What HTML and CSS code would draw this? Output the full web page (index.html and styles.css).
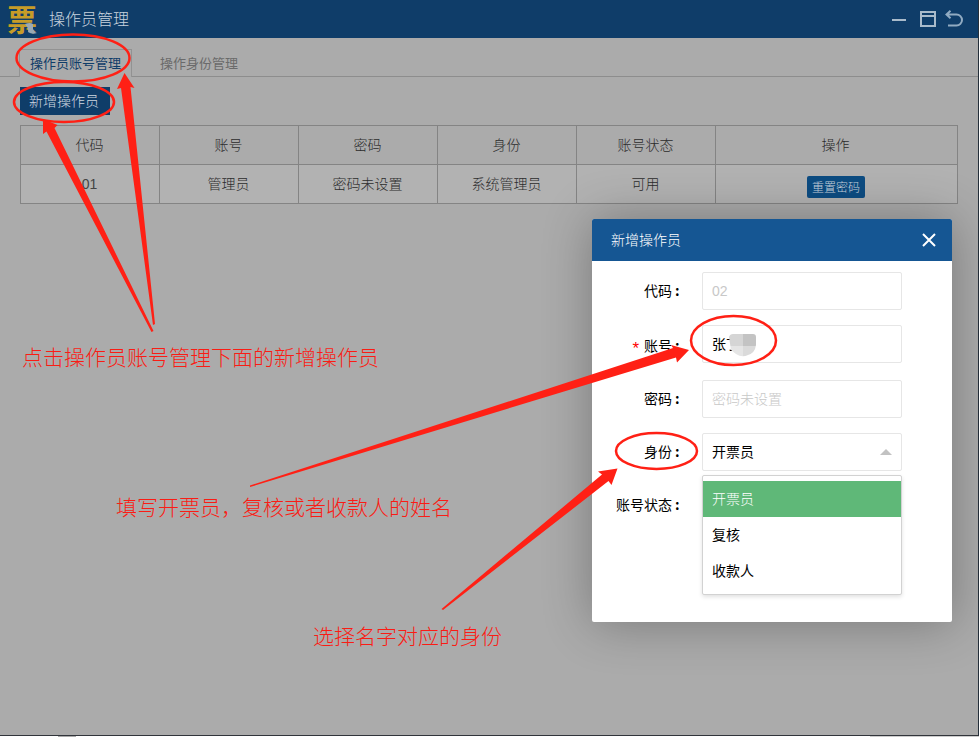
FILE: index.html
```html
<!DOCTYPE html>
<html lang="zh-CN">
<head>
<meta charset="utf-8">
<title>操作员管理</title>
<link rel="stylesheet" href="styles.css">
</head>
<body>
<div class="window">
  <header class="titlebar">
    <span class="logo">票<svg class="logo-mark" width="12" height="11" viewBox="0 0 12 11"><path d="M0 1Q5 -1 8 1V6Q9 9 12 10Q7 12 3 9Q4 5 0 1Z" fill="#9aa9b5"/></svg></span>
    <h1 class="app-title">操作员管理</h1>
    <div class="controls">
      <svg width="14" height="16" viewBox="0 0 14 16"><path d="M0 9H14" stroke="#a9bbcb" stroke-width="2"/></svg>
      <svg width="16" height="16" viewBox="0 0 16 16"><path d="M1 1H15V15H1ZM1 5H15" fill="none" stroke="#a9bbcb" stroke-width="2"/></svg>
      <svg width="18" height="18" viewBox="0 0 18 18"><path d="M5.500 0.800L1.500 4.500L5.500 8.200M2 4.500H11.500A5.500 5.500 0 0 1 11.500 15.500H3" fill="none" stroke="#91abc2" stroke-width="2"/></svg>
    </div>
  </header>
  <nav class="tabs">
    <a class="tab tab-active">操作员账号管理</a>
    <a class="tab">操作身份管理</a>
  </nav>
  <main class="content">
    <button class="add-button">新增操作员</button>
    <table class="operators">
      <thead><tr><th>代码</th><th>账号</th><th>密码</th><th>身份</th><th>账号状态</th><th class="col-action">操作</th></tr></thead>
      <tbody><tr><td><span class="latin">01</span></td><td>管理员</td><td>密码未设置</td><td>系统管理员</td><td>可用</td><td><button class="reset-button">重置密码</button></td></tr></tbody>
    </table>
  </main>
</div>
<div class="desktop-strip"><span class="strip-left"></span><span class="strip-right"></span></div>

<section class="dialog">
  <header class="dialog-header">
    <span>新增操作员</span>
    <svg width="14" height="14" viewBox="0 0 14 14"><path d="M1 1L13 13M13 1L1 13" stroke="#fff" stroke-width="2"/></svg>
  </header>
  <div class="form">
    <div class="row"><label>代码<span class="colon">:</span></label><div class="field placeholder latin">02</div></div>
    <div class="row row-account"><label><span class="required">*</span>账号<span class="colon">:</span></label><div class="field">张丁<svg class="mosaic" width="29" height="23" viewBox="0 0 29 23"><defs><clipPath id="smudge"><path d="M1 3Q2 0 5 0H25Q28 0 28 3V11Q27 19 20 21Q14 24 8 20L3 16Z"/></clipPath></defs><g clip-path="url(#smudge)"><path d="M0 0H15V12H0Z" fill="#d5d5d5"/><path d="M15 0H29V12H15Z" fill="#c3c3c3"/><path d="M0 12H15V23H0Z" fill="#e5e5e5"/><path d="M15 12H29V23H15Z" fill="#dadada"/></g></svg></div></div>
    <div class="row"><label>密码<span class="colon">:</span></label><div class="field placeholder">密码未设置</div></div>
    <div class="row row-role"><label>身份<span class="colon">:</span></label>
      <div class="field select">开票员<span class="caret"></span>
        <ul class="menu"><li class="selected">开票员</li><li>复核</li><li>收款人</li></ul>
      </div>
    </div>
    <div class="row"><label>账号状态<span class="colon">:</span></label></div>
  </div>
</section>

<svg class="annotations" width="979" height="737" viewBox="0 0 979 737">
  <g fill="none" stroke="#ff2015" stroke-width="2.500">
    <ellipse cx="73" cy="58" rx="56.500" ry="23.500"/>
    <ellipse cx="64" cy="102" rx="50" ry="20"/>
    <ellipse cx="733.500" cy="340.500" rx="42.500" ry="24.500"/>
    <ellipse cx="656.500" cy="451" rx="40.500" ry="18"/>
  </g>
  <g fill="#ff2015">
    <path d="M43 119L57.500 125L54.500 128L153.500 331L151.500 332L46.500 131.500L43 134Z"/>
    <path d="M124.500 73L134.500 88L130.500 87L155 324L153 325L121 88L117 89Z"/>
    <path d="M689 350L677 362.500L676 357.500L250 487L250 485.500L673 348L671 345Z"/>
    <path d="M617.500 468.500L611.500 485L608.500 481L443 610L441.500 609L602 474.500L598 471.500Z"/>
  </g>
</svg>
<p class="note note-add">点击操作员账号管理下面的新增操作员</p>
<p class="note note-name">填写开票员，复核或者收款人的姓名</p>
<p class="note note-role">选择名字对应的身份</p>
</body>
</html>
```
FILE: styles.css
```css
* { box-sizing: border-box; }
body { margin: 0; width: 979px; height: 737px; overflow: hidden; position: relative; background: #fff; font: 300 14px/20px "Noto Sans CJK SC", sans-serif; color: #2c2c2c; }
button { font: inherit; border: 0; padding: 0; display: block; }
.latin { font-family: "Liberation Sans", sans-serif; font-weight: 400; }

.window { height: 736px; background: #ababab; border-right: 1px solid #242f3a; border-bottom: 1px solid #30343a; }
.titlebar { height: 38px; display: flex; align-items: center; padding: 0 15px 0 7px; background: #0f3d69; color: #c8d3de; }
.logo { position: relative; width: 30px; font-size: 30px; line-height: 36px; padding-bottom: 2px; font-weight: 700; color: #c79c28; }
.logo-mark { position: absolute; left: 18px; top: 23px; }
.app-title { margin: 0 0 0 12px; padding-bottom: 2px; font-size: 16px; line-height: 36px; font-weight: 300; }
.controls { margin-left: auto; display: flex; align-items: center; gap: 14px; }
.controls svg:last-child { margin-left: -5px; }

.tabs { height: 39px; padding: 11px 0 0 19px; display: flex; gap: 1px; border-bottom: 1px solid #8d8d8d; }
.tab { height: 27px; padding: 0 27px; font-size: 13px; line-height: 27px; color: #6a6a6a; font-weight: 400; }
.tab-active { height: 28px; width: 113px; padding: 0 0 0 10px; border: 1px solid #929292; border-bottom: 0; background: #ababab; color: #0f3d69; line-height: 25px; }

.content { padding: 10px 20px 0; }
.add-button { width: 90px; height: 28px; padding: 0 2px 2px 0; background: #0f3d69; color: #d0d8e0; }
.operators { margin-top: 10px; width: 938px; table-layout: fixed; border-collapse: collapse; text-align: center; }
.operators th, .operators td { height: 39px; padding: 0 1px 2px 0; border: 1px solid #848484; font-weight: 300; }
.operators td { background: #b2b2b2; }
.operators th { width: 139px; }
.operators .col-action { width: 242px; padding-right: 2px; }
.operators .latin { color: #444; }
.reset-button { width: 58px; height: 22px; margin: 8px auto 0; border-radius: 2px; background: #0d4c82; color: #c8d3de; font-size: 12px; line-height: 22px; }

.desktop-strip { height: 1px; display: flex; justify-content: space-between; padding-left: 58px; }
.strip-left { width: 18px; background: #aaa; }
.strip-right { width: 109px; background: #ccc; }

.dialog { position: absolute; left: 592px; top: 219px; width: 360px; height: 403px; border-radius: 2px; background: #fff; box-shadow: 1px 1px 50px rgba(0, 0, 0, .3); color: #000; font-weight: 400; }
.dialog-header { height: 42px; padding: 0 16px 0 19px; display: flex; align-items: center; justify-content: space-between; background: #155693; color: #fff; border-radius: 2px 2px 0 0; font-weight: 300; }
.dialog-header span { padding-bottom: 2px; }
.form { padding: 11px 50px 0 0; display: flex; flex-direction: column; gap: 15px; }
.row { height: 38px; display: flex; align-items: center; }
.row-account { margin-bottom: 2px; }
.row label { width: 94px; margin-right: 16px; padding-bottom: 3px; text-align: right; white-space: nowrap; }
.row-account label { padding: 2px 0 0; }
.colon { display: inline-block; width: 14px; padding-left: 3px; text-align: left; font-weight: 700; }
.required { margin-right: 5px; color: #f00; font-family: "Liberation Sans", sans-serif; font-size: 17px; line-height: 14px; vertical-align: -3px; }
.field { position: relative; width: 200px; height: 38px; padding: 0 9px; border: 1px solid #e6e6e6; border-radius: 2px; line-height: 35px; }
.placeholder { color: #c8c8c8; font-weight: 300; }
.placeholder.latin { line-height: 37px; }
.mosaic { position: absolute; left: 25px; top: 8px; }
.caret { position: absolute; right: 9px; top: 15px; border: 6px solid transparent; border-top: 0; border-bottom-color: #c2c2c2; }
.menu { position: absolute; left: -1px; top: 41px; width: 200px; height: 120px; margin: 0; padding: 5px 0; list-style: none; background: #fff; border: 1px solid #d2d2d2; border-radius: 2px; box-shadow: 0 2px 4px rgba(0, 0, 0, .12); }
.menu li { height: 36px; padding: 0 9px; line-height: 34px; }
.menu .selected { background: #5fb878; color: #fff; font-weight: 300; }

.annotations { position: absolute; left: 0; top: 0; }
.note { position: absolute; margin: 0; font-size: 21px; line-height: 30px; color: #fa1c14; white-space: nowrap; }
.note-add { left: 22px; top: 341px; }
.note-name { left: 116px; top: 491px; }
.note-role { left: 313px; top: 620px; }
```
